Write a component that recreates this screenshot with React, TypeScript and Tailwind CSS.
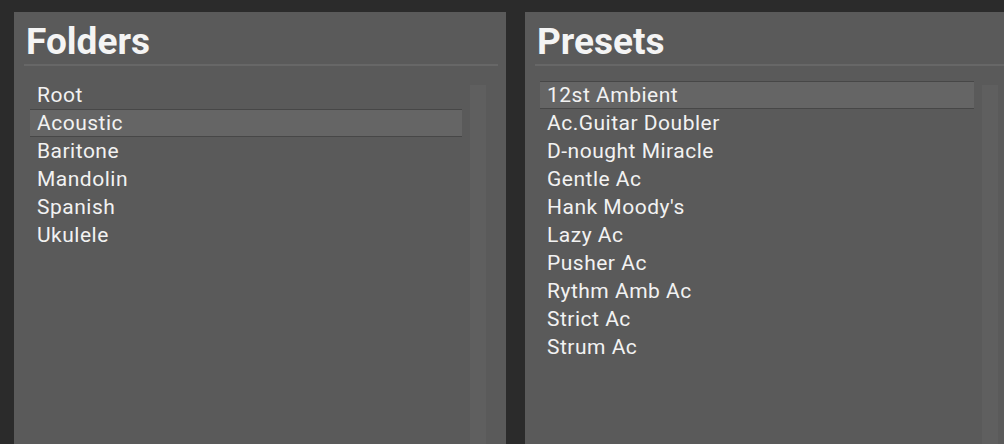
import React from "react";

const folders = ["Root", "Acoustic", "Baritone", "Mandolin", "Spanish", "Ukulele"];
const presets = [
  "12st Ambient",
  "Ac.Guitar Doubler",
  "D-nought Miracle",
  "Gentle Ac",
  "Hank Moody's",
  "Lazy Ac",
  "Pusher Ac",
  "Rythm Amb Ac",
  "Strict Ac",
  "Strum Ac",
];

function Panel({
  title,
  items,
  selected,
  rowsW,
  leftPad,
}: {
  title: string;
  items: string[];
  selected: number;
  rowsW: string;
  leftPad: string;
}) {
  return (
    <div className="w-[492px] shrink-0 h-full bg-[#5a5a5a] flex flex-col">
      <div className="h-[52px] pl-[12px] flex items-end">
        <span className="text-[37px] leading-[44px] font-bold text-[#f4f4f4]">{title}</span>
      </div>
      <div className="ml-[10px] mr-[8px] h-[2px] bg-[#676767]" />
      <div className="flex-1 flex mt-[15px]">
        <div className={`${leftPad} ${rowsW} flex flex-col`}>
          {items.map((it, i) => (
            <div
              key={it}
              className={
                i === selected
                  ? "h-[28px] flex items-center pl-[7px] pt-[2px] bg-[#656565] border-y border-[#474747] text-[21px] tracking-[0.5px] text-[#f2f2f2]"
                  : "h-[28px] flex items-center pl-[7px] pt-[2px] border-y border-transparent text-[21px] tracking-[0.5px] text-[#f2f2f2]"
              }
            >
              {it}
            </div>
          ))}
        </div>
        <div className="ml-[8px] mt-[4px] w-[16px] bg-[#5f5f5f]" />
      </div>
    </div>
  );
}

export default function App() {
  return (
    <div
      className="w-[1004px] h-[444px] overflow-hidden bg-[#2b2b2b] flex pt-[12px] pl-[14px] gap-[19px]"
      style={{ fontFamily: "Roboto, 'Noto Sans', sans-serif" }}
    >
      <Panel title="Folders" items={folders} selected={1} rowsW="w-[432px]" leftPad="ml-[16px]" />
      <Panel title="Presets" items={presets} selected={0} rowsW="w-[434px]" leftPad="ml-[15px]" />
    </div>
  );
}
